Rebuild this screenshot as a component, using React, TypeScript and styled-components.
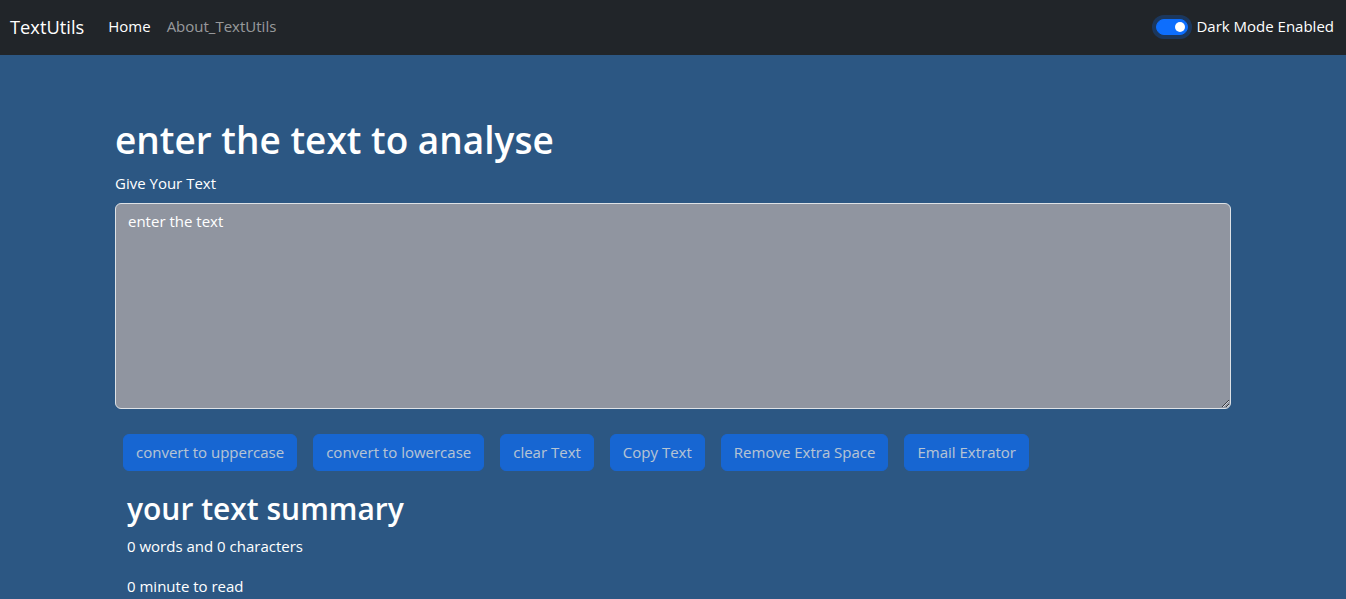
import React from "react";
import styled, { createGlobalStyle } from "styled-components";

const Global = createGlobalStyle`
  html, body { margin: 0; padding: 0; }
  body {
    background: #2c5783;
    color: #ffffff;
    font-family: "Open Sans", "Noto Sans", sans-serif;
    font-size: 15px;
    line-height: 1.5;
  }
  * { box-sizing: border-box; }
`;

const Nav = styled.nav`
  height: 55px;
  background: #212529;
  display: flex;
  align-items: center;
  justify-content: space-between;
  padding: 0 12px 2px 10px;
`;

const Left = styled.div`
  display: flex;
  align-items: center;
`;

const Brand = styled.a`
  font-size: 18.3px;
  color: #fff;
  margin-right: 16px;
  text-decoration: none;
  line-height: 30px;
`;

const NavLink = styled.a<{ $active?: boolean }>`
  padding: 8px;
  font-size: 15px;
  color: ${(p) => (p.$active ? "#fff" : "rgba(255,255,255,0.55)")};
  text-decoration: none;
`;

const SwitchWrap = styled.label`
  display: flex;
  align-items: center;
  gap: 8px;
  font-size: 15px;
  color: #fff;
`;

const Toggle = styled.span`
  position: relative;
  width: 32px;
  height: 16px;
  border-radius: 8px;
  background: #0d6efd;
  border: 1px solid #0d6efd;
  box-shadow: 0 0 0 4px rgba(13, 110, 253, 0.25);
  &::after {
    content: "";
    position: absolute;
    right: 2px;
    top: 2px;
    width: 10px;
    height: 10px;
    border-radius: 50%;
    background: #fff;
  }
`;

const Spacer = styled.div`
  height: 45px;
`;

const Container = styled.div<{ $inset?: number }>`
  max-width: 1140px;
  margin: 16px auto;
  padding: 0 ${(p) => 12 + (p.$inset || 0)}px;
`;

const Title = styled.h1`
  font-size: 37px;
  font-weight: 600;
  line-height: 48px;
  margin: 0 0 8px;
`;

const Label = styled.label`
  display: block;
  margin-bottom: 8px;
`;

const Area = styled.textarea`
  display: block;
  width: 100%;
  height: 206px;
  background: #9095a0;
  color: #fff;
  border: 1px solid #dee2e6;
  border-radius: 6px;
  padding: 6px 12px;
  font-family: inherit;
  font-size: 15px;
  line-height: 1.5;
  margin-bottom: 16px;
  &::placeholder { color: #fff; }
`;

const Buttons = styled.div`
  display: flex;
  flex-wrap: wrap;
`;

const Btn = styled.button`
  margin: 9px 8px 4px;
  height: 37px;
  padding: 0 12px;
  background: #0d6efd;
  border: 1px solid #0d6efd;
  border-radius: 6px;
  color: #fff;
  opacity: 0.65;
  font-family: inherit;
  font-size: 15px;
`;

const Sub = styled.h2`
  font-size: 30px;
  font-weight: 600;
  line-height: 36px;
  margin: 0 0 7px;
`;

const P = styled.p`
  margin: 0 0 16px;
  line-height: 24px;
`;

export default function App() {
  const buttons = [
    "convert to uppercase",
    "convert to lowercase",
    "clear Text",
    "Copy Text",
    "Remove Extra Space",
    "Email Extrator",
  ];
  return (
    <>
      <Global />
      <Nav>
        <Left>
          <Brand href="#">TextUtils</Brand>
          <NavLink $active href="#">Home</NavLink>
          <NavLink href="#">About_TextUtils</NavLink>
        </Left>
        <SwitchWrap>
          <Toggle />
          Dark Mode Enabled
        </SwitchWrap>
      </Nav>
      <Spacer />
      <Container>
        <Title>enter the text to analyse</Title>
        <Label>Give Your Text</Label>
        <Area placeholder="enter the text" defaultValue="" />
        <Buttons>
          {buttons.map((b) => (
            <Btn key={b} disabled>{b}</Btn>
          ))}
        </Buttons>
      </Container>
      <Container $inset={12}>
        <Sub>your text summary</Sub>
        <P>0 words and 0 characters</P>
        <P>0 minute to read</P>
      </Container>
    </>
  );
}
